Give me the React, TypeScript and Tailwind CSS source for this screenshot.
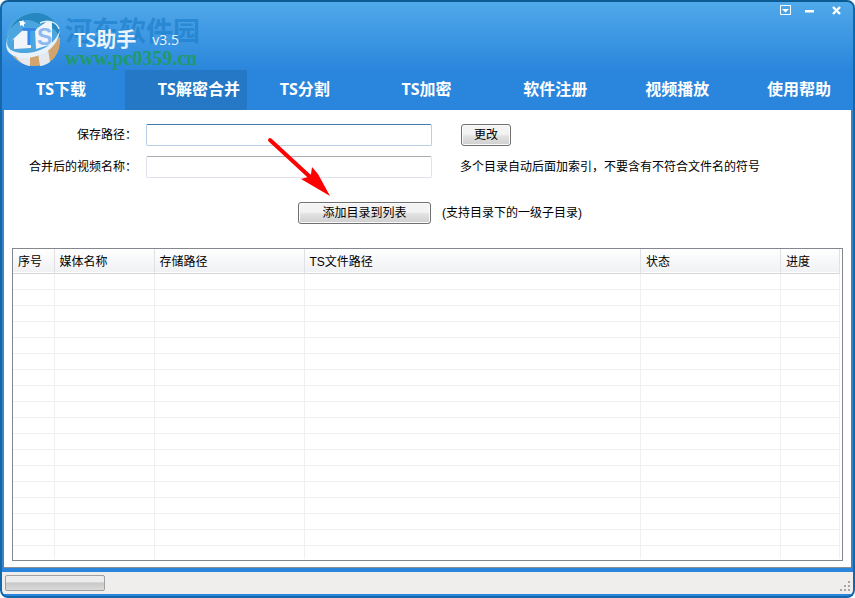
import { useState } from "react";

const TABS = ["TS下载", "TS解密合并", "TS分割", "TS加密", "软件注册", "视频播放", "使用帮助"];

const COLUMNS = [
  { title: "序号", width: "w-[41px]" },
  { title: "媒体名称", width: "w-[100px]" },
  { title: "存储路径", width: "w-[150px]" },
  { title: "TS文件路径", width: "w-auto" },
  { title: "状态", width: "w-[140px]" },
  { title: "进度", width: "w-[59px]" },
];

const EMPTY_ROWS = Array.from({ length: 17 }, (_, i) => i);

const BUTTON =
  "h-[22px] rounded-[3px] border border-[#707070] bg-linear-to-b from-[#f3f3f3] from-45% via-[#e2e2e2] via-55% to-[#cfcfcf] text-xs shadow-[inset_0_0_0_1px_#fbfbfb]";

export default function App() {
  return (
    <div className="flex min-h-screen flex-col overflow-hidden rounded-lg border-2 border-t-[#0b5c92] border-r-[#1268ab] border-b-[#1268ab] border-l-[#1268ab] bg-[#2a86dc] font-['Liberation_Sans','Noto_Sans_CJK_SC',sans-serif] text-xs text-black">
      <TitleBar />
      <NavTabs />
      <main className="flex grow flex-col border-x-2 border-[#3d84c6] bg-white px-2 pt-3.5">
        <PathForm />
        <TaskTable />
        <div className="-mx-2 mt-1.5 border-b border-[#8a8f98]" />
      </main>
      <StatusBar />
    </div>
  );
}

/* ---------------- Title bar ---------------- */
function TitleBar() {
  return (
    <header className="flex h-[68px] items-start justify-between bg-linear-to-b from-[#50a9e9] to-[#2a86dc]">
      <div className="relative flex items-end">
        <Logo />
        <Watermark />
        <div className="relative flex items-center gap-4 pb-[18px] pl-3 font-['Open_Sans','Noto_Sans_CJK_SC',sans-serif] text-white/90">
          <h1 className="text-xl leading-6 font-semibold">TS助手</h1>
          <span className="text-sm leading-6">v3.5</span>
        </div>
      </div>
      <div className="flex items-center pt-0.5 pr-3 text-white">
        <button type="button" aria-label="菜单" className="flex h-3 w-3 items-center justify-center">
          <svg viewBox="0 0 11 10" className="h-2.5 w-[11px]">
            <path d="M.5.5h10v9H.5z" fill="none" stroke="currentColor" />
            <path d="M2 4h7L5.500 7.500z" fill="currentColor" />
          </svg>
        </button>
        <button type="button" aria-label="最小化" className="ml-3.5">
          <svg viewBox="0 0 9 10" className="h-2.5 w-[9px]">
            <path d="M0 5h9v2.500H0z" fill="currentColor" />
          </svg>
        </button>
        <button type="button" aria-label="关闭" className="ml-3.5 pl-1">
          <svg viewBox="0 0 9 10" className="h-2.5 w-[9px]">
            <path d="M1 2l7 7M8 2L1 9" stroke="currentColor" strokeWidth="2.400" />
          </svg>
        </button>
      </div>
    </header>
  );
}

function Logo() {
  return (
    <svg viewBox="0 1 60 60" className="mt-2 h-[60px] w-[60px]" role="img" aria-label="TS">
      <circle cx="31" cy="30" r="27" fill="#4ba5df" />
      <path d="M8 20C15 5 38-3 52 12c5 6 7 12 6 18-3-10-11-15-21-15C26 7 14 12 8 20z" fill="#2787c0" />
      <path d="M8 41c15 7 34 3 50-13 1 18-9 29-25 29C21 57 12 51 8 41z" fill="#d3a56d" />
      <path d="M16 45l12 1v11c-7-1-11-5-14-9zM36 44l10-4 2 13c-3 2-7 4-10 4z" fill="#e5e8ef" />
      <path d="M12 40V30l-3 2 12-11 8 1v17zM33 21l11-8 6-1v23l-16 5z" fill="#f0f5fc" />
      <path d="M8 25C2 35 5 43 19 44c18 1 34-8 39-23-2 17-16 27-35 28C7 49-1 40 8 25z" fill="#e8f2fc" />
      <path d="M38 14c8-4 17-1 19 6" fill="none" stroke="#d9ecfa" strokeWidth="1.500" />
      <path d="M21 11l1 2 2 1-2 1v3l-2-2-2 1v-3l-1-2h3z" fill="#fff" />
      <text x="20" y="36" fontSize="23" fontWeight="700" fill="#3585e6" fontFamily="Liberation Sans, sans-serif">T</text>
      <text x="35" y="36" fontSize="23" fontWeight="700" fill="#8eb9ee" fontFamily="Liberation Sans, sans-serif">S</text>
    </svg>
  );
}

/* faint site stamp lying behind the title */
function Watermark() {
  return (
    <div className="pointer-events-none absolute top-3 left-[63px] whitespace-nowrap">
      <div className="font-['Noto_Sans_CJK_SC',sans-serif] text-[27px] leading-8 font-bold text-[#2283cf]/80">河东软件园</div>
      <div className="font-['Liberation_Serif',serif] text-xl leading-6 font-bold text-[#209a68]">www.pc0359.cn</div>
    </div>
  );
}

/* ---------------- Navigation ---------------- */
function NavTabs() {
  const [active, setActive] = useState(1);
  return (
    <nav className="grid h-10 grid-cols-[repeat(6,1fr)_119px] pl-px">
      {TABS.map((tab, i) => (
        <button
          key={tab}
          type="button"
          onClick={() => setActive(i)}
          aria-current={i === active ? "page" : undefined}
          className={`pb-0.5 pl-[33px] text-left font-['Open_Sans','Noto_Sans_CJK_SC',sans-serif] text-base font-bold whitespace-nowrap text-white ${i === active ? "bg-[#2478c5]" : ""}`}
        >
          {tab}
        </button>
      ))}
    </nav>
  );
}

/* ---------------- Save path form ---------------- */
function PathForm() {
  return (
    <form className="relative flex flex-col" onSubmit={(e) => e.preventDefault()}>
      <div className="flex h-[22px] items-center">
        <label htmlFor="save-path" className="w-[125px] shrink-0 text-right">保存路径：</label>
        <input id="save-path" type="text" className="ml-[9px] h-[22px] w-[286px] rounded-xs border border-[#b5cfe7] border-t-[#3d7bad] bg-white px-1 outline-none" />
        <button type="button" className={`ml-[29px] w-[50px] ${BUTTON}`}>更改</button>
      </div>
      <div className="mt-2.5 flex h-[22px] items-center">
        <label htmlFor="video-name" className="w-[125px] shrink-0 text-right">合并后的视频名称：</label>
        <input id="video-name" type="text" className="ml-[9px] h-[22px] w-[286px] rounded-xs border border-[#e2e3ea] border-t-[#abadb3] bg-white px-1 outline-none" />
        <span className="ml-7 whitespace-nowrap">多个目录自动后面加索引，不要含有不符合文件名的符号</span>
      </div>
      <div className="mt-6 flex h-[22px] items-center pl-[286px]">
        <button type="button" className={`w-[133px] ${BUTTON}`}>添加目录到列表</button>
        <span className="ml-[11px] whitespace-nowrap">(支持目录下的一级子目录)</span>
      </div>
      <svg viewBox="0 0 66 62" className="pointer-events-none absolute top-3 left-[255px] h-[62px] w-[66px]" aria-hidden="true">
        <path d="M3 4L42 40" stroke="#f00" strokeWidth="4" strokeLinecap="round" />
        <path d="M63 60L34 43l7-2 3-3 1-7 6 7z" fill="#f00" />
      </svg>
    </form>
  );
}

/* ---------------- Task list ---------------- */
function TaskTable() {
  return (
    <div className="mt-6 grow border border-[#828790] pr-0.5">
      <table className="w-full table-fixed border-collapse">
        <thead>
          <tr className="h-6 border-b border-[#d5d5d5] bg-linear-to-b from-white to-[#f0f1f3]">
            {COLUMNS.map((c) => (
              <th key={c.title} className={`${c.width} border-r border-[#dfe1e5] p-0 pt-0.5 pl-[5px] text-left font-normal whitespace-nowrap`}>{c.title}</th>
            ))}
          </tr>
        </thead>
        <tbody>
          {EMPTY_ROWS.map((r) => (
            <tr key={r} className="h-4 border-b border-[#f0f0f0]">
              {COLUMNS.map((c) => <td key={c.title} className="border-r border-[#f0f0f0] p-0" />)}
            </tr>
          ))}
          <tr className="h-3.5">
            {COLUMNS.map((c) => <td key={c.title} className="border-r border-[#f0f0f0] p-0" />)}
          </tr>
        </tbody>
      </table>
    </div>
  );
}

/* ---------------- Status bar ---------------- */
function StatusBar() {
  return (
    <footer className="mt-1 mb-0.5 flex h-[22px] items-center justify-between bg-[#f0eded] pr-0.5 pl-[3px]">
      <div role="progressbar" aria-label="总进度" aria-valuenow={0} className="h-4 w-[100px] rounded-xs border border-[#a0a0a0] bg-linear-to-b from-[#ececec] from-40% via-[#c9c9c9] via-50% to-[#dadada]" />
      <svg viewBox="0 0 11 11" className="mb-0.5 size-[11px] self-end" fill="#a9a5a5" aria-hidden="true">
        <path d="M8 0h2v2H8zM4 4h2v2H4zM8 4h2v2H8zM0 8h2v2H0zM4 8h2v2H4zM8 8h2v2H8z" />
      </svg>
    </footer>
  );
}
